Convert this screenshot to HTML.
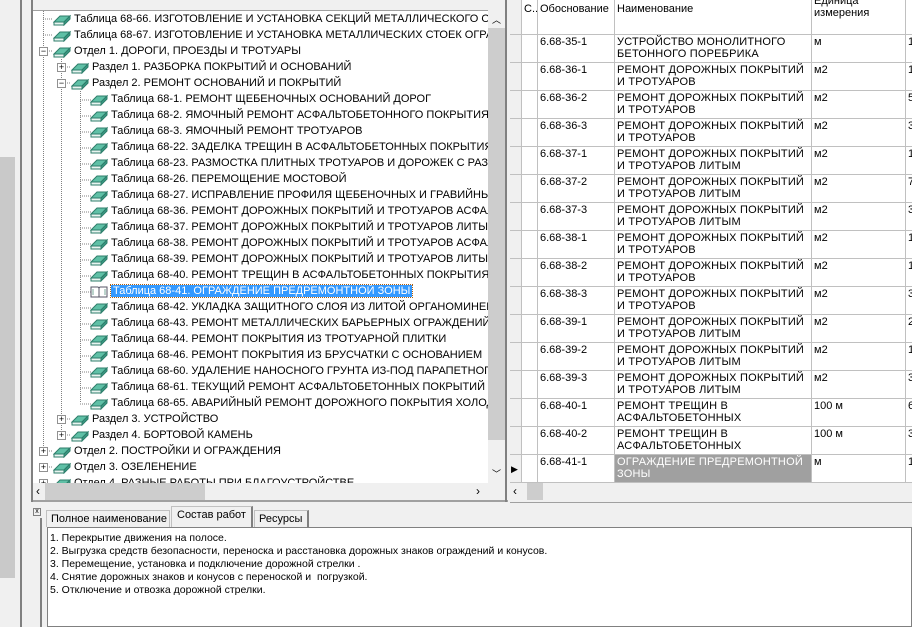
<!DOCTYPE html><html><head><meta charset="utf-8"><style>
*{box-sizing:border-box;margin:0;padding:0}
body{width:912px;height:627px;background:#f0f0f0;font-family:"Liberation Sans","DejaVu Sans",sans-serif;font-size:11px;position:relative;overflow:hidden;color:#000}
.abs{position:absolute}
.tree{left:33px;top:10px;width:455px;height:473px;background:#fff;overflow:hidden;border-top:1px solid #a0a0a0}
.row{position:absolute;height:16px;line-height:16px;white-space:nowrap}
.bk{position:absolute;top:2px;width:18px;height:13px}
.pm{position:absolute;top:4px;width:9px;height:9px;border:1px solid #919191;background:#fff;font-size:9px;line-height:7px;text-align:center;color:#000}
.sel{background:#3399ff;color:#fff;outline:1px dotted #b0600f;padding:0 2px}
.grid{left:510px;top:0;width:402px;height:483px;background:#fff;overflow:hidden}
.gr{position:absolute;left:0;width:402px;border-bottom:1px solid #c0c0c0}
.c{position:absolute;top:0;height:100%;border-right:1px solid #c0c0c0;padding:1px 2px;line-height:12px;overflow:hidden}
</style></head><body>
<div class="abs" style="left:0;top:157px;width:15px;height:421px;background:#c9c9c9"></div>
<div class="abs" style="left:20px;top:0;width:2px;height:627px;background:#808080"></div>
<div class="abs" style="left:31px;top:0;width:2px;height:502px;background:#808080"></div>
<div class="abs" style="left:33px;top:500px;width:475px;height:2px;background:#a0a0a0"></div>
<div class="abs tree">
<svg width="455" height="473" style="position:absolute;left:0;top:0" stroke="#808080" stroke-dasharray="1,1" fill="none">
<path d="M10.5 0V440M28.5 48V424M47.5 80V392M10 8H20M10 24H20M10 40H20M28 56H38M28 72H38M47 89H58M47 105H58M47 121H58M47 137H58M47 153H58M47 169H58M47 185H58M47 201H58M47 217H58M47 233H58M47 249H58M47 265H58M47 281H58M47 297H58M47 313H58M47 329H58M47 345H58M47 361H58M47 377H58M47 393H58M28 408H38M28 424H38M10 440H20M10 456H20"/>
</svg>
<div id="t"></div>
</div>
<div class="abs" style="left:488px;top:10px;width:17px;height:473px;background:#f0f0f0"><div style="position:absolute;left:0;top:18px;width:17px;height:412px;background:#cdcdcd"></div><div style="position:absolute;top:3px;left:4px;font-size:9px">︿</div><div style="position:absolute;bottom:3px;left:4px;font-size:9px">﹀</div></div>
<div class="abs" style="left:33px;top:483px;width:472px;height:17px;background:#f0f0f0"><div style="position:absolute;left:12px;top:0;width:160px;height:17px;background:#cdcdcd"></div><div style="position:absolute;left:3px;top:1px;font-size:12px">‹</div><div style="position:absolute;left:443px;top:1px;font-size:12px">›</div></div>
<div class="abs" style="left:505px;top:0;width:2px;height:502px;background:#808080"></div>
<div class="abs grid" id="g"></div>
<div class="abs" style="left:510px;top:483px;width:402px;height:17px;background:#f0f0f0"><div style="position:absolute;left:17px;top:0;width:16px;height:17px;background:#cdcdcd"></div><div style="position:absolute;left:3px;top:1px;font-size:12px">‹</div></div>
<div class="abs" style="left:510px;top:502px;width:402px;height:1px;background:#a0a0a0"></div>
<div class="abs" style="left:33px;top:508px;width:8px;height:8px;border:1px solid #808080;font-size:7px;line-height:6px;text-align:center">x</div>
<div class="abs" style="left:40px;top:518px;width:2px;height:109px;background:#808080"></div>
<div class="abs" style="left:46px;top:510px;width:124px;height:17px;border:1px solid #c0c0c0;border-bottom:none;line-height:16px;padding-left:4px;font-size:11px">Полное наименование</div>
<div class="abs" style="left:171px;top:506px;width:82px;height:21px;border:1px solid #c0c0c0;border-right:2px solid #808080;border-bottom:none;background:#f0f0f0;line-height:17px;padding-left:5px;font-size:11px">Состав работ</div>
<div class="abs" style="left:254px;top:510px;width:55px;height:17px;border:1px solid #c0c0c0;border-right:2px solid #808080;border-bottom:none;line-height:16px;padding-left:4px;font-size:11px">Ресурсы</div>
<div class="abs" style="left:47px;top:527px;width:865px;height:100px;background:#fff;border:1px solid #808080;padding:4px 2px;line-height:13px;font-size:10.5px">1. Перекрытие движения на полосе.<br>2. Выгрузка средств безопасности, переноска и расстановка дорожных знаков ограждений и конусов.<br>3. Перемещение, установка и подключение дорожной стрелки .<br>4. Снятие дорожных знаков и конусов с переноской и &nbsp;погрузкой.<br>5. Отключение и отвозка дорожной стрелки.</div>
<script>
var book='<svg class="bk" viewBox="0 0 18 13"><path d="M1 9L7 3H17L11 9Z" fill="#5fc0a6" stroke="#2d7d6a"/><path d="M1 9H11V12H1Z" fill="#e8f4f0" stroke="#2d7d6a"/><path d="M11 9L17 3V6L11 12Z" fill="#3a9b84" stroke="#2d7d6a"/></svg>';
var open='<svg class="bk" viewBox="0 0 18 13"><path d="M1 2H8L9 3L10 2H17V12H1Z" fill="#fff" stroke="#556"/><path d="M9 3V12" stroke="#556"/><path d="M3 4V10M15 4V10" stroke="#7a9"/></svg>';
var T=[[0,'','Таблица 68-66. ИЗГОТОВЛЕНИЕ И УСТАНОВКА СЕКЦИЙ МЕТАЛЛИЧЕСКОГО ОГРАЖДЕНИЯ'],[0,'','Таблица 68-67. ИЗГОТОВЛЕНИЕ И УСТАНОВКА МЕТАЛЛИЧЕСКИХ СТОЕК ОГРАЖДЕНИЯ'],[0,'−','Отдел 1. ДОРОГИ, ПРОЕЗДЫ И ТРОТУАРЫ'],[1,'+','Раздел 1. РАЗБОРКА ПОКРЫТИЙ И ОСНОВАНИЙ'],[1,'−','Раздел 2. РЕМОНТ ОСНОВАНИЙ И ПОКРЫТИЙ'],
[2,'','Таблица 68-1. РЕМОНТ ЩЕБЕНОЧНЫХ ОСНОВАНИЙ ДОРОГ'],[2,'','Таблица 68-2. ЯМОЧНЫЙ РЕМОНТ АСФАЛЬТОБЕТОННОГО ПОКРЫТИЯ ДОРОГ'],[2,'','Таблица 68-3. ЯМОЧНЫЙ РЕМОНТ ТРОТУАРОВ'],[2,'','Таблица 68-22. ЗАДЕЛКА ТРЕЩИН В АСФАЛЬТОБЕТОННЫХ ПОКРЫТИЯХ'],[2,'','Таблица 68-23. РАЗМОСТКА ПЛИТНЫХ ТРОТУАРОВ И ДОРОЖЕК С РАЗБОРКОЙ'],[2,'','Таблица 68-26. ПЕРЕМОЩЕНИЕ МОСТОВОЙ'],[2,'','Таблица 68-27. ИСПРАВЛЕНИЕ ПРОФИЛЯ ЩЕБЕНОЧНЫХ И ГРАВИЙНЫХ ДОРОГ'],[2,'','Таблица 68-36. РЕМОНТ ДОРОЖНЫХ ПОКРЫТИЙ И ТРОТУАРОВ АСФАЛЬТОБЕТОНОМ'],[2,'','Таблица 68-37. РЕМОНТ ДОРОЖНЫХ ПОКРЫТИЙ И ТРОТУАРОВ ЛИТЫМ'],[2,'','Таблица 68-38. РЕМОНТ ДОРОЖНЫХ ПОКРЫТИЙ И ТРОТУАРОВ АСФАЛЬТОБЕТОНОМ'],[2,'','Таблица 68-39. РЕМОНТ ДОРОЖНЫХ ПОКРЫТИЙ И ТРОТУАРОВ ЛИТЫМ'],[2,'','Таблица 68-40. РЕМОНТ ТРЕЩИН В АСФАЛЬТОБЕТОННЫХ ПОКРЫТИЯХ'],[2,'s','Таблица 68-41. ОГРАЖДЕНИЕ ПРЕДРЕМОНТНОЙ ЗОНЫ'],[2,'','Таблица 68-42. УКЛАДКА ЗАЩИТНОГО СЛОЯ ИЗ ЛИТОЙ ОРГАНОМИНЕРАЛЬНОЙ'],[2,'','Таблица 68-43. РЕМОНТ МЕТАЛЛИЧЕСКИХ БАРЬЕРНЫХ ОГРАЖДЕНИЙ'],[2,'','Таблица 68-44. РЕМОНТ ПОКРЫТИЯ ИЗ ТРОТУАРНОЙ ПЛИТКИ'],[2,'','Таблица 68-46. РЕМОНТ ПОКРЫТИЯ ИЗ БРУСЧАТКИ С ОСНОВАНИЕМ'],[2,'','Таблица 68-60. УДАЛЕНИЕ НАНОСНОГО ГРУНТА ИЗ-ПОД ПАРАПЕТНОГО'],[2,'','Таблица 68-61. ТЕКУЩИЙ РЕМОНТ АСФАЛЬТОБЕТОННЫХ ПОКРЫТИЙ'],[2,'','Таблица 68-65. АВАРИЙНЫЙ РЕМОНТ ДОРОЖНОГО ПОКРЫТИЯ ХОЛОДНЫМ'],[1,'+','Раздел 3. УСТРОЙСТВО'],[1,'+','Раздел 4. БОРТОВОЙ КАМЕНЬ'],[0,'+','Отдел 2. ПОСТРОЙКИ И ОГРАЖДЕНИЯ'],[0,'+','Отдел 3. ОЗЕЛЕНЕНИЕ'],[0,'+','Отдел 4. РАЗНЫЕ РАБОТЫ ПРИ БЛАГОУСТРОЙСТВЕ']];
var h='',ind=[0,18,37];
T.forEach(function(r,i){var x=ind[r[0]],y=i*16;
if(r[1]=='+'||r[1]=='−')h+='<div class="pm" style="left:'+(x+6)+'px;top:'+(y+4)+'px">'+r[1]+'</div>';
h+='<div class="row" style="left:'+(x+20)+'px;top:'+y+'px;width:25px">'+(r[1]=='s'?open:book)+'</div>';
h+='<div class="row" style="left:'+(x+41)+'px;top:'+y+'px"><span'+(r[1]=='s'?' class="sel"':'')+'>'+r[2]+'</span></div>';});
document.getElementById('t').innerHTML=h;
var cols=[[0,12],[12,16],[28,77],[105,197],[302,94],[396,20]];
var R=[['6.68-35-1','УСТРОЙСТВО МОНОЛИТНОГО БЕТОННОГО ПОРЕБРИКА','м','1'],['6.68-36-1','РЕМОНТ ДОРОЖНЫХ ПОКРЫТИЙ И ТРОТУАРОВ','м2','1'],['6.68-36-2','РЕМОНТ ДОРОЖНЫХ ПОКРЫТИЙ И ТРОТУАРОВ','м2','5'],['6.68-36-3','РЕМОНТ ДОРОЖНЫХ ПОКРЫТИЙ И ТРОТУАРОВ','м2','3'],['6.68-37-1','РЕМОНТ ДОРОЖНЫХ ПОКРЫТИЙ И ТРОТУАРОВ ЛИТЫМ','м2','1'],['6.68-37-2','РЕМОНТ ДОРОЖНЫХ ПОКРЫТИЙ И ТРОТУАРОВ ЛИТЫМ','м2','7'],['6.68-37-3','РЕМОНТ ДОРОЖНЫХ ПОКРЫТИЙ И ТРОТУАРОВ ЛИТЫМ','м2','3'],['6.68-38-1','РЕМОНТ ДОРОЖНЫХ ПОКРЫТИЙ И ТРОТУАРОВ','м2','1'],['6.68-38-2','РЕМОНТ ДОРОЖНЫХ ПОКРЫТИЙ И ТРОТУАРОВ','м2','1'],['6.68-38-3','РЕМОНТ ДОРОЖНЫХ ПОКРЫТИЙ И ТРОТУАРОВ','м2','3'],['6.68-39-1','РЕМОНТ ДОРОЖНЫХ ПОКРЫТИЙ И ТРОТУАРОВ ЛИТЫМ','м2','2'],['6.68-39-2','РЕМОНТ ДОРОЖНЫХ ПОКРЫТИЙ И ТРОТУАРОВ ЛИТЫМ','м2','1'],['6.68-39-3','РЕМОНТ ДОРОЖНЫХ ПОКРЫТИЙ И ТРОТУАРОВ ЛИТЫМ','м2','3'],['6.68-40-1','РЕМОНТ ТРЕЩИН В АСФАЛЬТОБЕТОННЫХ','100 м','6'],['6.68-40-2','РЕМОНТ ТРЕЩИН В АСФАЛЬТОБЕТОННЫХ','100 м','3'],['6.68-41-1','ОГРАЖДЕНИЕ ПРЕДРЕМОНТНОЙ ЗОНЫ','м','1']];
var g='<div class="gr" style="top:0;height:35px;background:#fff">';
var hd=['','С..','Обоснование','Наименование','Единица<br>измерения',''];
cols.forEach(function(c,j){g+='<div class="c" style="left:'+c[0]+'px;width:'+c[1]+'px;'+(j==0?'background:#f0f0f0;':'')+(j==4?'top:-6px;height:41px;':'padding-top:3px;')+'">'+hd[j]+'</div>'});g+='</div>';
R.forEach(function(r,i){var y=35+i*28,last=i==15;g+='<div class="gr" style="top:'+y+'px;height:28px">';
var v=[last?'<span style="font-size:9px">▶</span>':'','',r[0],r[1],r[2],r[3]];
cols.forEach(function(c,j){var st='left:'+c[0]+'px;width:'+c[1]+'px;';if(j==0)st+='background:#f0f0f0;padding:8px 1px;';if(j==3)st+='letter-spacing:0.2px;';if(last&&j==3)st+='background:#a0a0a0;color:#fff;';g+='<div class="c" style="'+st+'">'+v[j]+'</div>'});g+='</div>'});
document.getElementById('g').innerHTML=g;
</script>
</body></html>
